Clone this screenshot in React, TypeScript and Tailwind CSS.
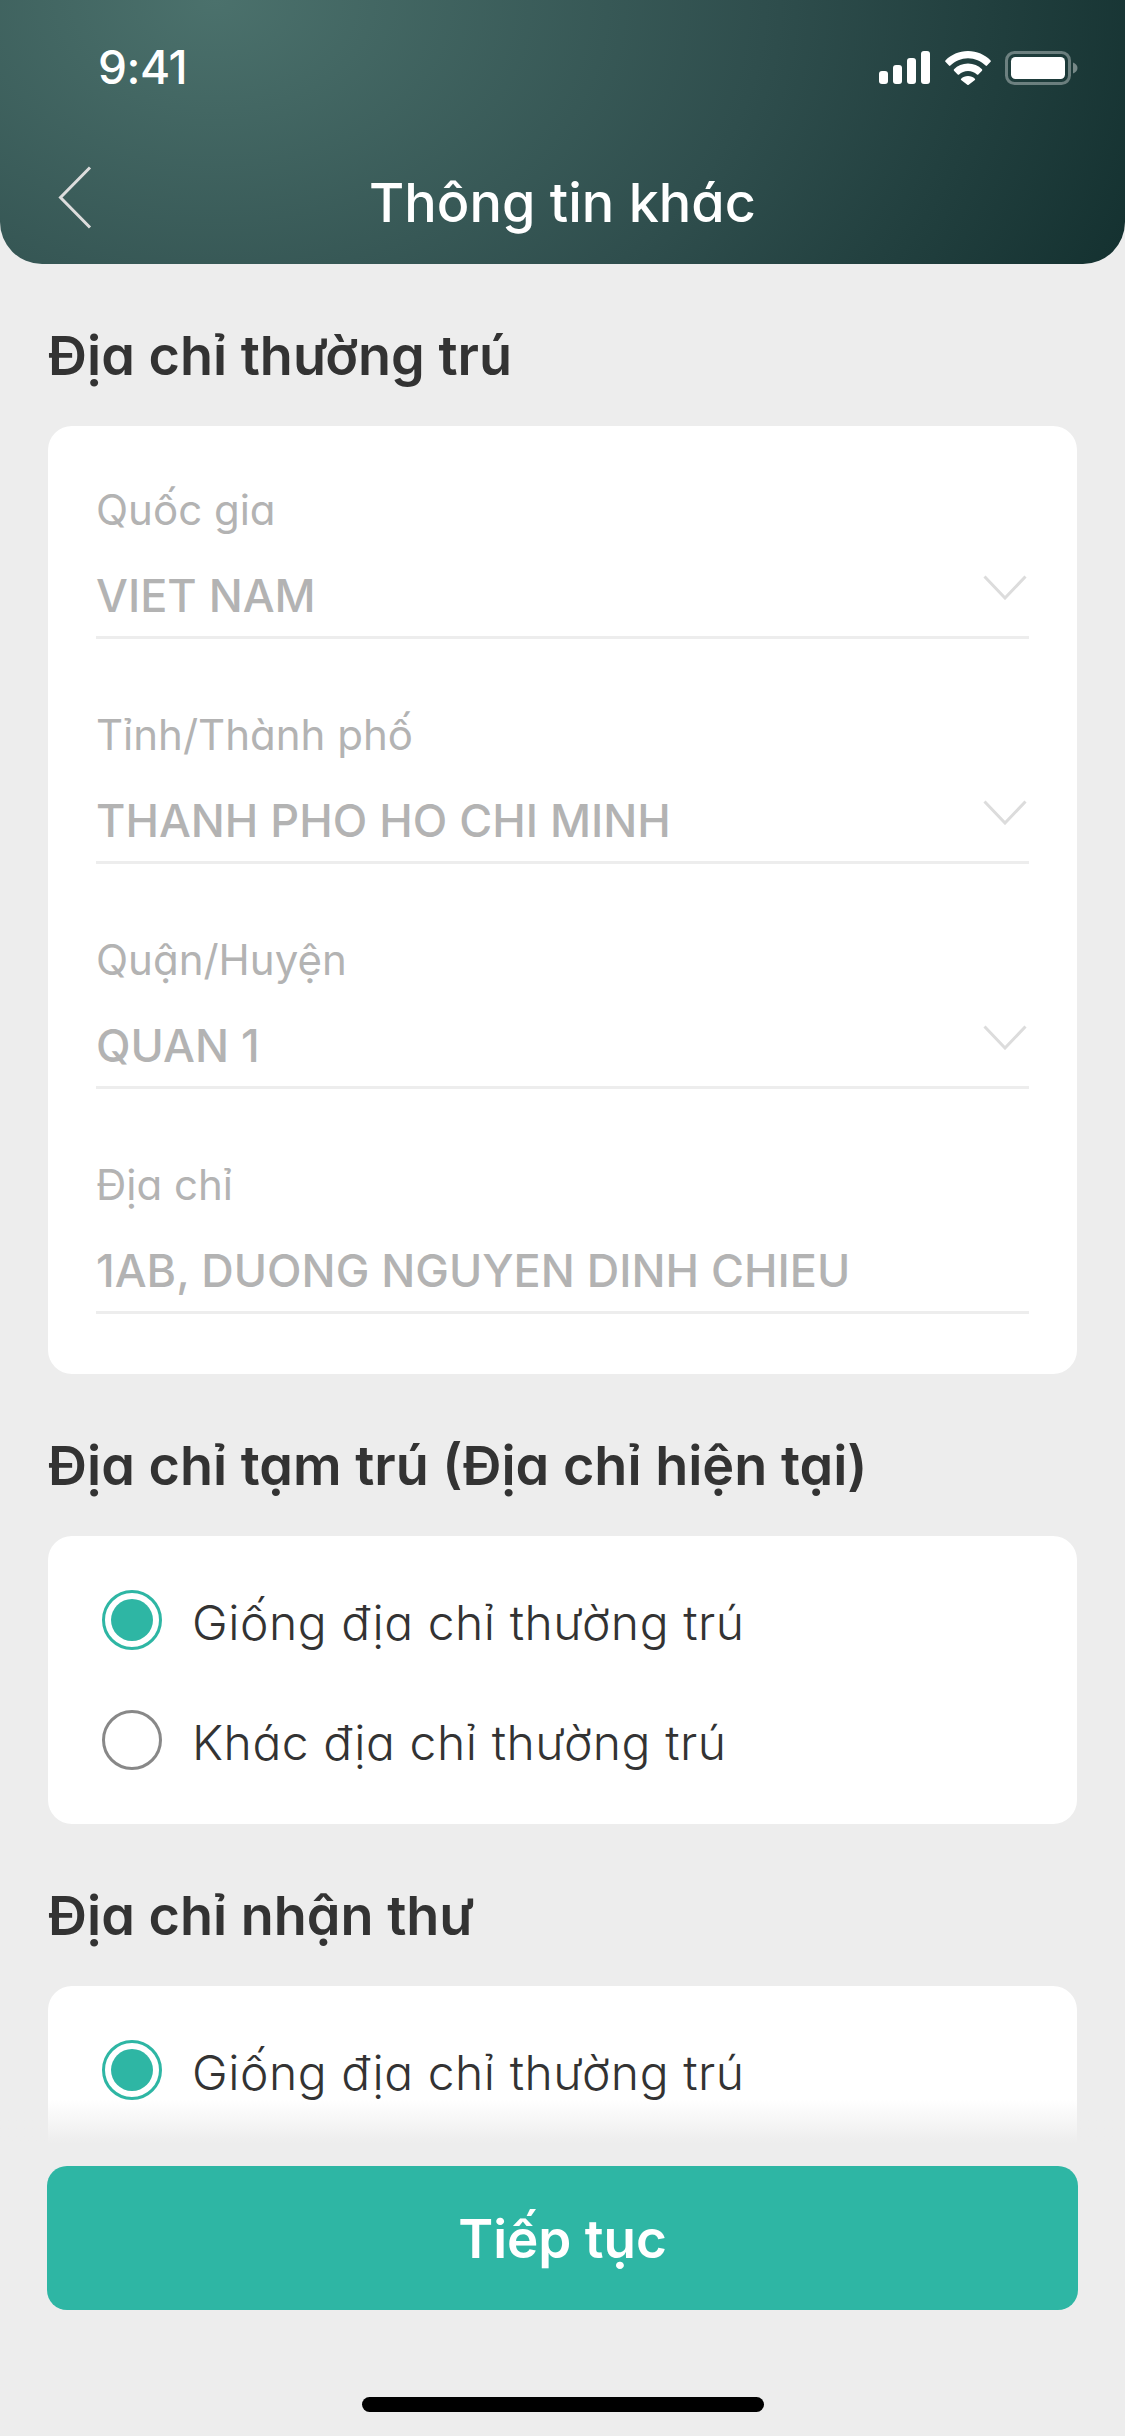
const font = "font-['Inter','Noto_Sans',sans-serif] [font-feature-settings:'cv11']"

function SignalIcon() {
  return (
    <svg width="52" height="33" viewBox="0 0 52 33" fill="#fff">
      <rect x="0" y="20" width="9" height="13" rx="3" />
      <rect x="14" y="14" width="9" height="19" rx="3" />
      <rect x="28" y="7" width="9" height="26" rx="3" />
      <rect x="42" y="0" width="9" height="33" rx="3" />
    </svg>
  )
}

function WifiIcon() {
  return (
    <svg width="46" height="34" viewBox="0 0 46 34" fill="#fff">
      <path d="M23 0C14 0 6.2 3.6 0.4 9.4c-.4.4-.4 1 0 1.4l3.6 3.8c.4.4 1 .4 1.4 0C10 10 16.200 7.200 23 7.200s13 2.800 17.600 7.400c.4.400 1 .4 1.400 0l3.600-3.800c.4-.4.4-1 0-1.400C39.800 3.600 32 0 23 0z" />
      <path d="M23 12.500c-5.500 0-10.400 2.200-14 5.800-.4.400-.4 1 0 1.400l3.700 3.800c.4.400 1 .4 1.400 0 2.300-2.200 5.400-3.500 8.900-3.500s6.600 1.300 8.900 3.500c.4.400 1 .4 1.400 0l3.700-3.800c.4-.4.4-1 0-1.400-3.600-3.600-8.500-5.800-14-5.800z" />
      <path d="M23 25c-2.700 0-5.100 1-6.900 2.700-.4.400-.4 1 0 1.400l6.200 4.600c.4.300 1 .3 1.400 0l6.200-4.600c.4-.4.400-1 0-1.400C28.100 26 25.700 25 23 25z" />
    </svg>
  )
}

function BatteryIcon() {
  return (
    <svg width="73" height="34" viewBox="0 0 73 34" fill="none">
      <rect x="1.500" y="1.500" width="63" height="31" rx="8" stroke="#fff" strokeOpacity="0.35" strokeWidth="3" />
      <rect x="6" y="6" width="54" height="22" rx="4.500" fill="#fff" />
      <path d="M68 11.500c2.800 1 4.500 3 4.500 5.500s-1.700 4.500-4.500 5.500z" fill="#fff" fillOpacity="0.4" />
    </svg>
  )
}

function Chevron() {
  return (
    <svg width="44" height="25" viewBox="0 0 44 25" fill="none" className="absolute right-[2px] top-[7px]">
      <path d="M1.500 1.500L22 23L42.500 1.500" stroke="#dcdcdc" strokeWidth="3" />
    </svg>
  )
}

function Field({ label, value, select }: { label: string; value: string; select?: boolean }) {
  return (
    <div className="h-[225px] pt-[57px]">
      <div className="text-[42px] leading-[54px] text-[#b3b3b3]">{label}</div>
      <div className="relative mt-[31px] h-[71px] border-b-[3px] border-[#ededed]">
        <div className="pt-[1px] text-[45px] leading-[54px] font-medium text-[#b3b3b3]">{value}</div>
        {select && <Chevron />}
      </div>
    </div>
  )
}

function Radio({ label, checked }: { label: string; checked?: boolean }) {
  return (
    <div className="flex h-[120px] items-center gap-[30px]">
      {checked ? (
        <div className="flex h-[60px] w-[60px] items-center justify-center rounded-full border-[3px] border-[#2eb6a4]">
          <div className="h-[42px] w-[42px] rounded-full bg-[#2eb6a4]" />
        </div>
      ) : (
        <div className="h-[60px] w-[60px] rounded-full border-[3px] border-[#888888]" />
      )}
      <span className="mt-[5px] text-[48px] leading-[60px] font-light tracking-[0.55px] text-[#333333]">{label}</span>
    </div>
  )
}

function Heading({ children, className }: { children: string; className: string }) {
  return <h2 className={`text-[54px] leading-[70px] font-semibold text-[#333333] ${className}`}>{children}</h2>
}

export default function App() {
  return (
    <div className={`relative h-[2436px] w-[1125px] overflow-hidden bg-[#ededed] ${font}`}>
      {/* Header */}
      <div className="h-[264px] rounded-b-[42px] bg-[radial-gradient(ellipse_1000px_700px_at_215px_0px,#4b716c_0%,#2f4e4d_55%,#13302f_100%)] px-[58px]">
        <div className="flex h-[135px] items-center justify-between">
          <span className="ml-[40px] text-[46px] font-medium tracking-[-0.5px] text-white">9:41</span>
          <div className="mr-[-11px] flex items-center gap-[14px]">
            <SignalIcon />
            <WifiIcon />
            <BatteryIcon />
          </div>
        </div>
        <div className="relative mt-[33px] flex h-[70px] items-center justify-center">
          <svg width="34" height="63" viewBox="0 0 34 63" fill="none" className="absolute left-0 top-[-2px]">
            <path d="M32 1.500L2.500 31.500L32 61.500" stroke="#dddddd" strokeWidth="3" />
          </svg>
          <h1 className="text-[54px] leading-[70px] font-medium text-white">Thông tin khác</h1>
        </div>
      </div>

      <div className="px-[48px]">
        <Heading className="mt-[57px]">Địa chỉ thường trú</Heading>

        <div className="mt-[35px] h-[948px] rounded-[24px] bg-white px-[48px]">
          <Field label="Quốc gia" value="VIET NAM" select />
          <Field label="Tỉnh/Thành phố" value="THANH PHO HO CHI MINH" select />
          <Field label="Quận/Huyện" value="QUAN 1" select />
          <Field label="Địa chỉ" value="1AB, DUONG NGUYEN DINH CHIEU" />
        </div>

        <Heading className="mt-[57px]">Địa chỉ tạm trú (Địa chỉ hiện tại)</Heading>

        <div className="mt-[35px] h-[288px] rounded-[24px] bg-white px-[54px] pt-[24px]">
          <Radio label="Giống địa chỉ thường trú" checked />
          <Radio label="Khác địa chỉ thường trú" />
        </div>

        <Heading className="mt-[57px]">Địa chỉ nhận thư</Heading>

        <div className="mt-[35px] h-[288px] rounded-[24px] bg-white px-[54px] pt-[24px]">
          <Radio label="Giống địa chỉ thường trú" checked />
        </div>
      </div>

      {/* Bottom action bar over the scrolling content */}
      <div className="absolute inset-x-0 bottom-0 h-[336px]">
        <div className="h-[43px] bg-gradient-to-b from-[#ededed00] to-[#ededed]" />
        <div className="h-[293px] bg-[#ededed] px-[47px] pt-[23px]">
          <button className="flex h-[144px] w-full items-center justify-center rounded-[20px] bg-[#2eb6a4] pt-[4px] text-[53px] font-semibold text-white">
            Tiếp tục
          </button>
          <div className="mx-auto mt-[87px] h-[15px] w-[402px] rounded-full bg-black" />
        </div>
      </div>
    </div>
  )
}
